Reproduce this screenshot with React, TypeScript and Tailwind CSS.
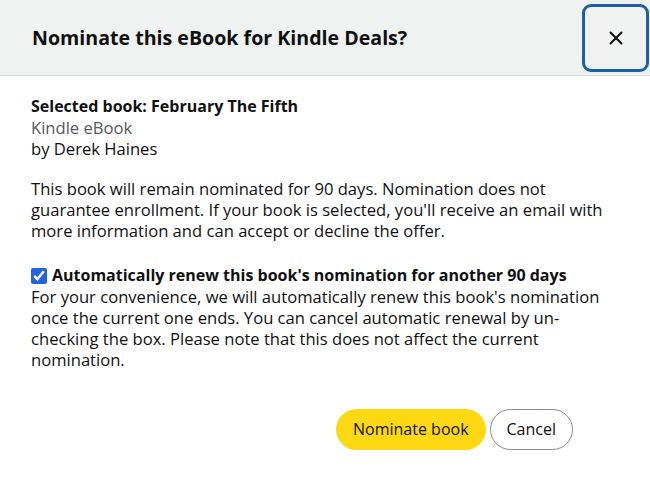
import { X } from 'lucide-react';

const font = { fontFamily: '"Open Sans", Arial, sans-serif' };

export default function App() {
  return (
    <div className="h-[484px] w-[650px] overflow-hidden bg-[#8a8a8a]" style={font}>
      <div className="h-full w-[660px] rounded-tl-[10px] bg-white text-[#0f1111]">
        <div className="flex h-[76px] items-center justify-between border-b border-[#d5d9d9] bg-[#f0f2f2] pl-[32px] pr-[11px]">
          <h1 className="text-[19.6px] font-bold">Nominate this eBook for Kindle Deals?</h1>
          <button className="flex h-[68px] w-[67px] items-center justify-center rounded-[9px] border-[3px] border-[#1c5ea8]">
            <X className="h-[22px] w-[22px]" strokeWidth={2.2} />
          </button>
        </div>

        <div className="w-[634px] px-[31px] pt-[20px] text-[16.6px] leading-[21px]">
          <div className="text-[16px] font-bold">Selected book: February The Fifth</div>
          <div className="text-[#565959]">Kindle eBook</div>
          <div>by Derek Haines</div>

          <p className="mt-[19px]">
            This book will remain nominated for 90 days. Nomination does not guarantee enrollment. If your book is selected, you'll receive an email with more information and can accept or decline the offer.
          </p>

          <div className="mt-[24px]">
            <label className="flex items-center gap-[5px] text-[16px] font-bold">
              <input type="checkbox" defaultChecked className="h-[16px] w-[16px] accent-[#2162e8]" />
              Automatically renew this book's nomination for another 90 days
            </label>
            <p>
              For your convenience, we will automatically renew this book's nomination once the current one ends. You can cancel automatic renewal by un-checking the box. Please note that this does not affect the current nomination.
            </p>
          </div>

          <div className="mt-[39px] flex justify-end gap-[4px] pr-[30px] text-[16px]">
            <button className="h-[41px] rounded-full bg-[#ffd814] px-[17px]">Nominate book</button>
            <button className="h-[41px] rounded-full border border-[#888c8c] bg-white px-[16px]">Cancel</button>
          </div>
        </div>
      </div>
    </div>
  );
}
